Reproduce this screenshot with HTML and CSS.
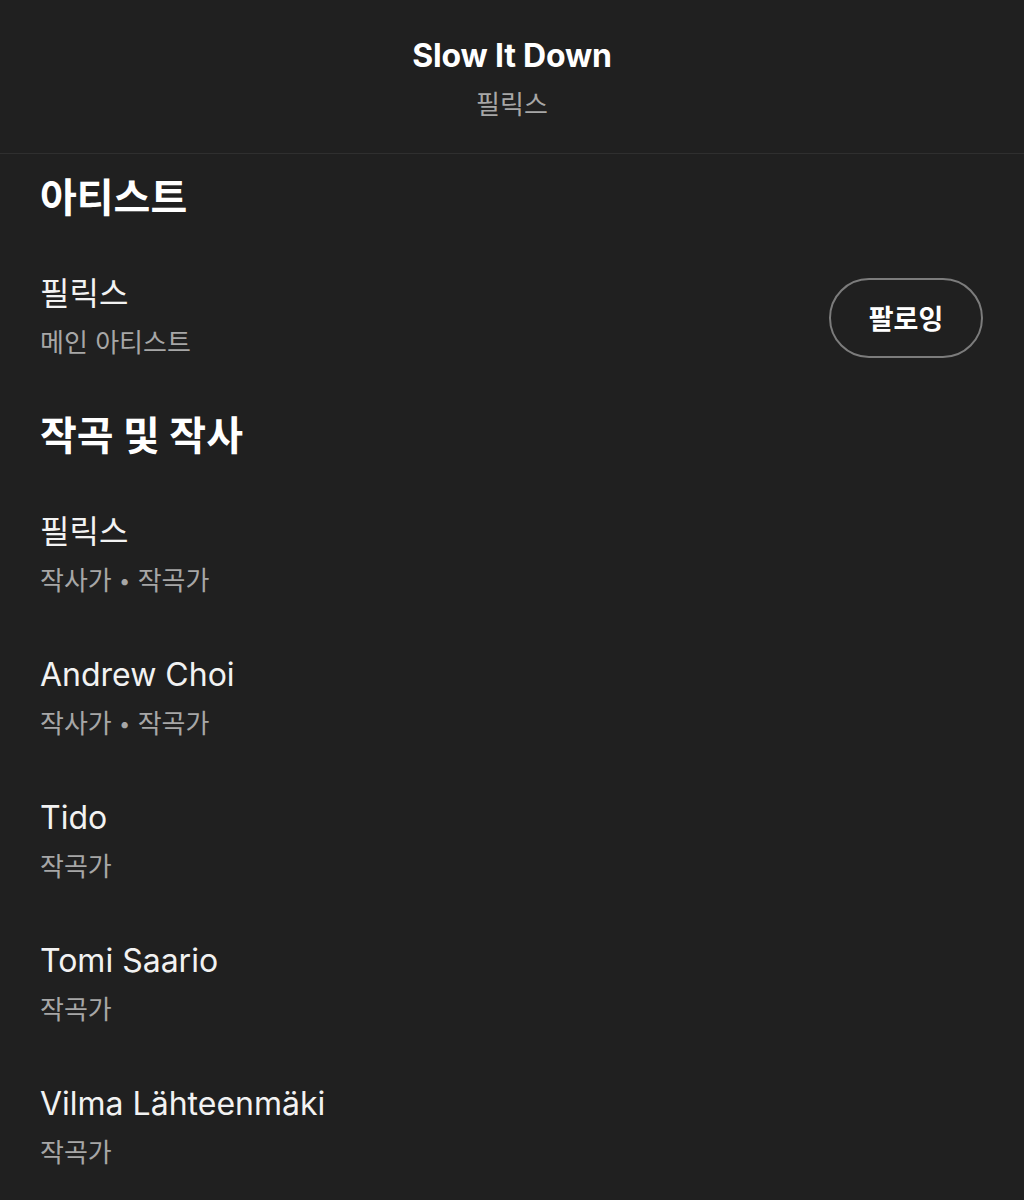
FILE: index.html
```html
<!DOCTYPE html>
<html lang="ko">
<head>
  <meta charset="utf-8">
  <link rel="stylesheet" href="styles.css">
</head>
<body>
  <header class="top-bar">
    <h1 class="track-title">Slow It Down</h1>
    <p class="track-artist">필릭스</p>
  </header>

  <main class="credits">
    <!-- 아티스트 -->
    <section class="credit-section">
      <h2 class="section-title">아티스트</h2>
      <div class="credit-row">
        <div class="credit-info">
          <div class="credit-name">필릭스</div>
          <div class="credit-role">메인 아티스트</div>
        </div>
        <button class="follow-btn">팔로잉</button>
      </div>
    </section>

    <!-- 작곡 및 작사 -->
    <section class="credit-section">
      <h2 class="section-title">작곡 및 작사</h2>
      <div class="credit-row">
        <div class="credit-info">
          <div class="credit-name">필릭스</div>
          <div class="credit-role">작사가 <span class="dot">•</span> 작곡가</div>
        </div>
      </div>
      <div class="credit-row">
        <div class="credit-info">
          <div class="credit-name">Andrew Choi</div>
          <div class="credit-role">작사가 <span class="dot">•</span> 작곡가</div>
        </div>
      </div>
      <div class="credit-row">
        <div class="credit-info">
          <div class="credit-name">Tido</div>
          <div class="credit-role">작곡가</div>
        </div>
      </div>
      <div class="credit-row">
        <div class="credit-info">
          <div class="credit-name">Tomi Saario</div>
          <div class="credit-role">작곡가</div>
        </div>
      </div>
      <div class="credit-row">
        <div class="credit-info">
          <div class="credit-name">Vilma Lähteenmäki</div>
          <div class="credit-role">작곡가</div>
        </div>
      </div>
    </section>
  </main>
</body>
</html>
```

FILE: styles.css
```css
body {
  margin: 0;
  background-color: #202020;
  color: #fff;
  font-family: Inter, "Noto Sans CJK KR", sans-serif;
}
.top-bar {
  text-align: center;
  padding: 37px 0 0;
  height: 116px;
  border-bottom: 1px solid #2f2f2f;
}
.track-title {
  margin: 0;
  font-size: 32px;
  line-height: 38px;
  font-weight: 700;
  letter-spacing: -0.2px;
}
.track-artist {
  margin: 14px 0 0;
  font-size: 26px;
  line-height: 32px;
  color: #a7a7a7;
}
.credits {
  padding: 0 41px 0 40px;
}
.credit-section + .credit-section {
  margin-top: 3px;
}
.section-title {
  margin: 0 0 23px;
  padding-top: 19px;
  font-size: 40px;
  line-height: 50px;
  font-weight: 700;
}
.credit-row {
  display: flex;
  justify-content: space-between;
  align-items: center;
  padding: 28px 0;
}
.credit-name {
  font-size: 32px;
  line-height: 40px;
  color: #f2f2f2;
}
.credit-role {
  margin-top: 11px;
  font-size: 26px;
  line-height: 36px;
  color: #a7a7a7;
}
.credit-role .dot {
  font-size: 20px;
  vertical-align: 2px;
}
.follow-btn {
  width: 154px;
  height: 80px;
  border: 2px solid #7c7c7c;
  border-radius: 40px;
  background: transparent;
  color: #fff;
  font-family: inherit;
  font-size: 27px;
  font-weight: 700;
  cursor: pointer;
}
```
